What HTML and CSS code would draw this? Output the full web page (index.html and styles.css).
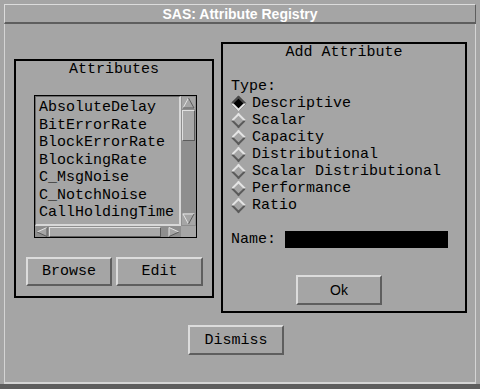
FILE: index.html
```html
<!DOCTYPE html>
<html lang="en">
<head>
    <meta charset="UTF-8">
    <title>SAS: Attribute Registry</title>
    <link rel="stylesheet" href="styles.css">
</head>
<body>
<div class="window">
    <div class="titlebar">SAS: Attribute Registry</div>
    <div class="client">
        <div class="panels">
            <div class="frame frame-list">
                <div class="frame-title">Attributes</div>
                <div class="listbox">
                    <ul class="list-view">
                        <li>AbsoluteDelay</li>
                        <li>BitErrorRate</li>
                        <li>BlockErrorRate</li>
                        <li>BlockingRate</li>
                        <li>C_MsgNoise</li>
                        <li>C_NotchNoise</li>
                        <li>CallHoldingTime</li>
                    </ul>
                    <div class="vscroll">
                        <svg class="arrow" width="13" height="12" viewBox="0 0 13 12">
                            <polygon points="6.5,1 12,11 1,11" fill="#a5a5a5"/>
                            <polyline points="1,11 6.5,1" stroke="#e2e2e2" fill="none"/>
                            <polyline points="6.5,1 12,11 1,11" stroke="#5c5c5c" fill="none"/>
                        </svg>
                        <div class="vthumb"></div>
                        <div class="vtrough"></div>
                        <svg class="arrow" width="13" height="12" viewBox="0 0 13 12">
                            <polygon points="1,1 12,1 6.5,11" fill="#a5a5a5"/>
                            <polyline points="6.5,11 1,1 12,1" stroke="#e2e2e2" fill="none"/>
                            <polyline points="12,1 6.5,11" stroke="#5c5c5c" fill="none"/>
                        </svg>
                    </div>
                    <div class="hscroll">
                        <svg class="arrow" width="12" height="10" viewBox="0 0 12 10">
                            <polygon points="1,5 11,0.5 11,9.5" fill="#a5a5a5"/>
                            <polyline points="11,0.5 1,5" stroke="#e2e2e2" fill="none"/>
                            <polyline points="1,5 11,9.5 11,0.5" stroke="#5c5c5c" fill="none"/>
                        </svg>
                        <div class="hthumb"></div>
                        <div class="htrough"></div>
                        <svg class="arrow" width="12" height="10" viewBox="0 0 12 10">
                            <polygon points="1,0.5 11,5 1,9.5" fill="#a5a5a5"/>
                            <polyline points="1,9.5 1,0.5 11,5" stroke="#e2e2e2" fill="none"/>
                            <polyline points="11,5 1,9.5" stroke="#5c5c5c" fill="none"/>
                        </svg>
                    </div>
                    <div class="corner"></div>
                </div>
                <div class="button-row">
                    <button class="btn btn-browse">Browse</button>
                    <button class="btn btn-edit">Edit</button>
                </div>
            </div>

            <div class="frame frame-add">
                <div class="frame-title">Add Attribute</div>
                <div class="type-label">Type:</div>
                <ul class="radio-list">
                    <li class="radio selected"><span class="diamond"></span>Descriptive</li>
                    <li class="radio"><span class="diamond"></span>Scalar</li>
                    <li class="radio"><span class="diamond"></span>Capacity</li>
                    <li class="radio"><span class="diamond"></span>Distributional</li>
                    <li class="radio"><span class="diamond"></span>Scalar Distributional</li>
                    <li class="radio"><span class="diamond"></span>Performance</li>
                    <li class="radio"><span class="diamond"></span>Ratio</li>
                </ul>
                <div class="name-row">
                    <label for="name">Name:</label>
                    <input type="text" id="name" class="name-field">
                </div>
                <button class="btn btn-ok">Ok</button>
            </div>
        </div>
        <div class="dismiss-row">
            <button class="btn btn-dismiss">Dismiss</button>
        </div>
    </div>
</div>
</body>
</html>
```

FILE: styles.css
```css
body {
    margin: 0;
    background-color: #a5a5a5;
    font-family: "Liberation Mono", monospace;
    font-size: 15px;
    color: #000;
}

.window {
    width: 480px;
    height: 389px;
    box-sizing: border-box;
    padding: 4px 4px 0 4px;
    border-bottom: 5px solid #5e5e5e;
    display: flex;
    flex-direction: column;
}

.titlebar {
    height: 20px;
    box-sizing: border-box;
    border-top: 1px solid #dcdcdc;
    border-left: 1px solid #dcdcdc;
    border-right: 1px solid #5e5e5e;
    border-bottom: 2px solid #5e5e5e;
    color: #fff;
    font-family: "Liberation Sans", Arial, sans-serif;
    font-weight: bold;
    font-size: 14px;
    line-height: 19px;
    text-align: center;
}

.client {
    flex: 1;
    border-left: 1px solid #d4d4d4;
    border-right: 1px solid #d4d4d4;
    border-bottom: 2px solid #d4d4d4;
}

.panels {
    display: flex;
    align-items: flex-start;
    gap: 7px;
    padding: 18px 0 0 9px;
}

.frame {
    border: 2px solid #000;
    box-sizing: border-box;
}

.frame-title {
    text-align: center;
    line-height: 17px;
}

/* left frame */
.frame-list {
    width: 200px;
    height: 239px;
    margin-top: 17px;
}

.listbox {
    margin: 17px 0 0 18px;
    width: 163px;
    height: 143px;
    box-sizing: border-box;
    border: 1px solid #000;
    display: grid;
    grid-template-columns: 146px 15px;
    grid-template-rows: 130px 11px;
}

.list-view {
    list-style: none;
    margin: 0;
    padding: 2px 0 0 3px;
    border-top: 1px solid #6a6a6a;
    border-left: 1px solid #6a6a6a;
    border-right: 2px solid #d8d8d8;
    border-bottom: 2px solid #d8d8d8;
    overflow: hidden;
    line-height: 17.5px;
}

.vscroll {
    display: flex;
    flex-direction: column;
    align-items: center;
    background-color: #8e8e8e;
    padding: 1px 0;
}

.vscroll .arrow {
    flex: none;
    background-color: #a5a5a5;
}

.vthumb {
    width: 11px;
    height: 29px;
    margin-top: 1px;
    background-color: #a8a8a8;
    border-top: 1px solid #e0e0e0;
    border-left: 1px solid #e0e0e0;
    border-right: 1px solid #5c5c5c;
    border-bottom: 1px solid #5c5c5c;
}

.vtrough {
    flex: 1;
}

.hscroll {
    display: flex;
    align-items: center;
    background-color: #8e8e8e;
    padding: 0 1px;
}

.hthumb {
    width: 110px;
    height: 8px;
    margin-left: 1px;
    background-color: #a8a8a8;
    border-top: 1px solid #e0e0e0;
    border-left: 1px solid #e0e0e0;
    border-right: 1px solid #5c5c5c;
    border-bottom: 1px solid #5c5c5c;
}

.htrough {
    flex: 1;
}

.corner {
    background-color: #a5a5a5;
}

.button-row {
    display: flex;
    gap: 4px;
    margin: 19px 0 0 10px;
}

.btn {
    font-family: "Liberation Mono", monospace;
    font-size: 15px;
    color: #000;
    background-color: #a5a5a5;
    border-top: 2px solid #dcdcdc;
    border-left: 2px solid #dcdcdc;
    border-right: 2px solid #5e5e5e;
    border-bottom: 2px solid #5e5e5e;
    padding: 0;
    box-sizing: border-box;
}

.btn-browse {
    width: 86px;
    height: 29px;
}

.btn-edit {
    width: 87px;
    height: 29px;
}

/* right frame */
.frame-add {
    width: 246px;
    height: 271px;
}

.type-label {
    margin: 17px 0 0 8px;
    line-height: 17px;
}

.radio-list {
    list-style: none;
    margin: 0;
    padding: 0 0 0 8px;
}

.radio {
    display: flex;
    align-items: center;
    height: 17px;
    line-height: 17px;
}

.diamond {
    width: 11px;
    height: 11px;
    margin: 0 8px 0 2px;
    transform: rotate(45deg);
    box-sizing: border-box;
    border-top: 2px solid #e4e4e4;
    border-left: 2px solid #e4e4e4;
    border-right: 2px solid #5a5a5a;
    border-bottom: 2px solid #5a5a5a;
}

.radio.selected .diamond {
    background-color: #000;
    border-top-color: #4a4a4a;
    border-left-color: #4a4a4a;
    border-right-color: #e4e4e4;
    border-bottom-color: #e4e4e4;
}

.name-row {
    display: flex;
    align-items: center;
    margin: 17px 0 0 8px;
    line-height: 17px;
}

.name-row label {
    width: 54px;
}

.name-field {
    width: 163px;
    height: 17px;
    box-sizing: border-box;
    border: none;
    padding: 0;
    background-color: #000;
}

.btn-ok {
    display: block;
    width: 86px;
    height: 30px;
    margin: 27px 0 0 73px;
    font-family: "Liberation Sans", Arial, sans-serif;
    font-size: 14px;
}

.dismiss-row {
    padding: 12px 0 0 183px;
}

.btn-dismiss {
    width: 96px;
    height: 30px;
}
```
